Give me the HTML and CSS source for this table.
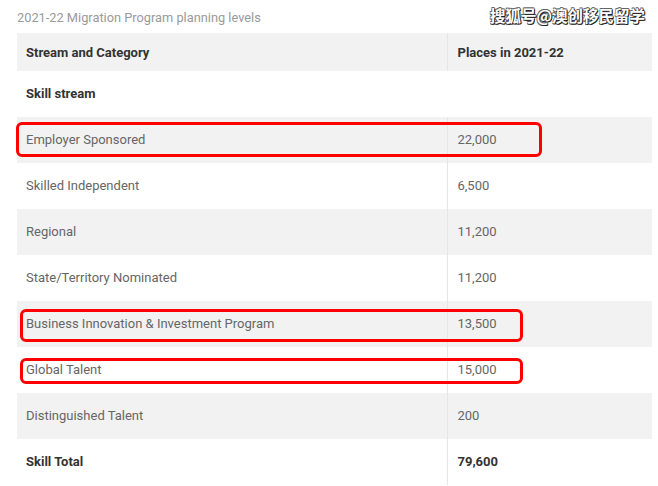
FILE: index.html
```html
<!DOCTYPE html>
<html lang="en">
<head>
    <meta charset="UTF-8">
    <meta name="viewport" content="width=device-width, initial-scale=1.0">
    <title>2021-22 Migration Program planning levels</title>
    <link rel="stylesheet" href="styles.css">
</head>
<body>
    <div class="page">
        <div class="watermark">搜狐号@澳创移民留学</div>
        <div class="caption">2021-22 Migration Program planning levels</div>
        <table class="levels">
            <thead>
                <tr>
                    <th>Stream and Category</th>
                    <th class="col-places">Places in 2021-22</th>
                </tr>
            </thead>
            <tbody>
                <tr class="strong"><td colspan="2">Skill stream</td></tr>
                <tr><td>Employer Sponsored</td><td class="col-places">22,000</td></tr>
                <tr><td>Skilled Independent</td><td class="col-places">6,500</td></tr>
                <tr><td>Regional</td><td class="col-places">11,200</td></tr>
                <tr><td>State/Territory Nominated</td><td class="col-places">11,200</td></tr>
                <tr><td>Business Innovation &amp; Investment Program</td><td class="col-places">13,500</td></tr>
                <tr><td>Global Talent</td><td class="col-places">15,000</td></tr>
                <tr><td>Distinguished Talent</td><td class="col-places">200</td></tr>
                <tr class="strong"><td>Skill Total</td><td class="col-places">79,600</td></tr>
            </tbody>
        </table>

        <!-- red annotation boxes drawn over the table -->
        <div class="mark mark-employer"></div>
        <div class="mark mark-business"></div>
        <div class="mark mark-global"></div>
    </div>
</body>
</html>
```

FILE: styles.css
```css
body, html {
    margin: 0;
    padding: 0;
    background: #fff;
    font-family: Roboto, "Liberation Sans", Arial, sans-serif;
}

.page {
    position: relative;
    width: 658px;
    height: 486px;
    overflow: hidden;
    padding-left: 17px;
    box-sizing: border-box;
}

.caption {
    height: 33px;
    line-height: 35px;
    font-size: 12.8px;
    color: #9a9a9a;
}

.watermark {
    position: absolute;
    top: 4px;
    right: 13px;
    font-family: "Noto Sans CJK SC", sans-serif;
    font-size: 15.5px;
    font-weight: bold;
    color: #fff;
    text-shadow:
        1px 1px 0 #222, -0.6px -0.6px 0 #666, 0.6px -0.6px 0 #666,
        -0.6px 0.6px 0 #666, 1px 0 0 #444, 0 1px 0 #444;
}

.levels {
    width: 635px;
    border-collapse: collapse;
    font-size: 13px;
    color: #666;
}

.levels th,
.levels td {
    height: 46px;
    padding: 0 0 1px 9px;
    text-align: left;
    vertical-align: middle;
    box-sizing: border-box;
}

.levels th {
    height: 38px;
    padding: 0 0 0 9px;
    font-weight: bold;
    color: #333;
}

.levels .col-places {
    width: 205px;
    padding-left: 10px;
    border-left: 1px solid #e6e6e6;
}

.levels thead tr,
.levels tbody tr:nth-child(even) {
    background: #f2f2f2;
}

.levels tr.strong td {
    font-weight: bold;
    color: #333;
}

.mark {
    position: absolute;
    border: 3px solid #f00;
    border-radius: 6px;
    box-sizing: border-box;
}

.mark-employer {
    left: 16px;
    top: 122px;
    width: 526px;
    height: 35px;
}

.mark-business {
    left: 20px;
    top: 309px;
    width: 503px;
    height: 33px;
}

.mark-global {
    left: 20px;
    top: 358px;
    width: 503px;
    height: 26px;
}
```
